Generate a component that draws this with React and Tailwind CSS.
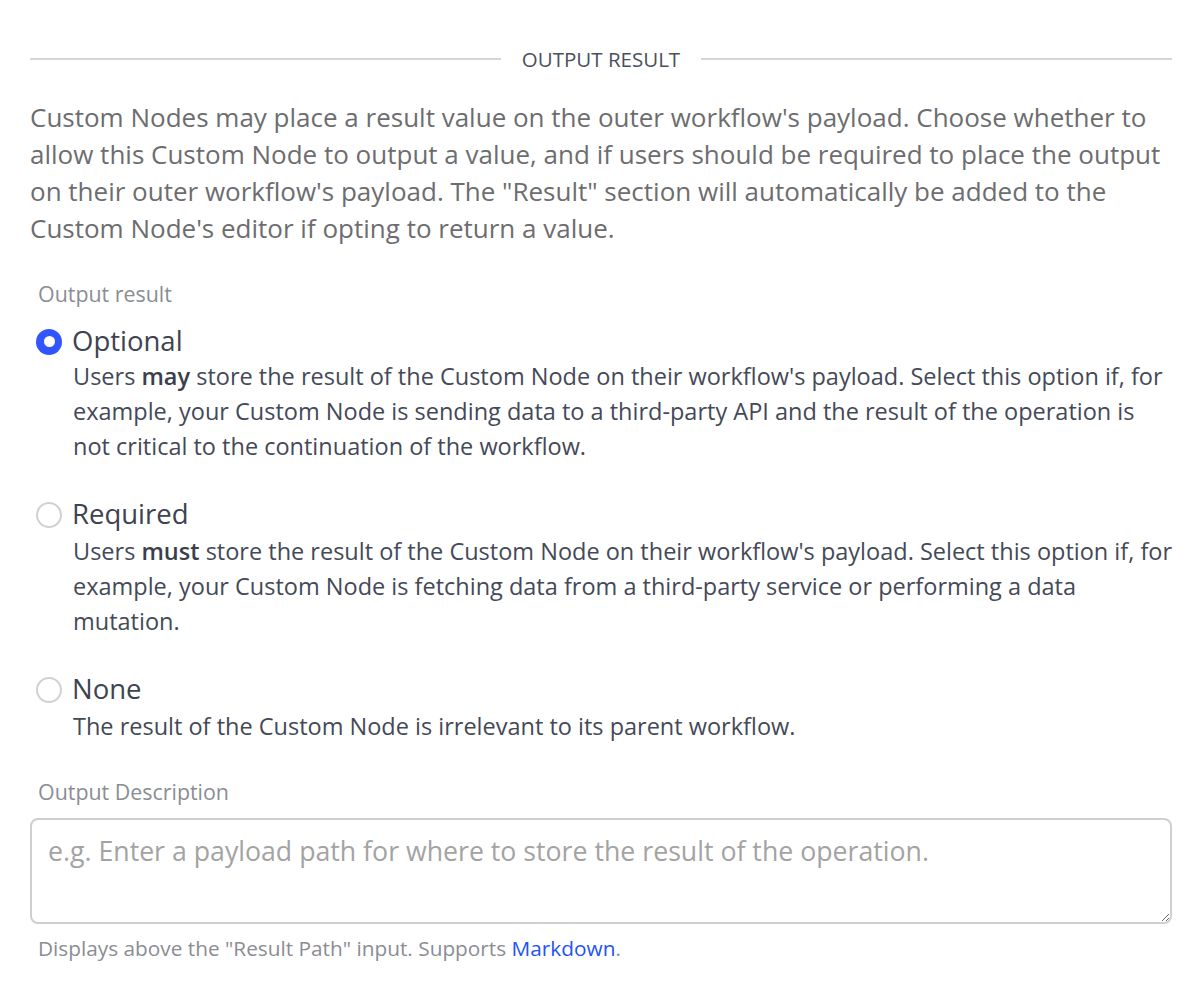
const font = { fontFamily: '"Open Sans", "Noto Sans", sans-serif' };

function Radio({ checked }) {
  if (checked) {
    return (
      <span className="mt-[1px] grid h-[26px] w-[26px] shrink-0 place-items-center rounded-full bg-[#3355ff]">
        <span className="h-[11px] w-[11px] rounded-full bg-white" />
      </span>
    );
  }
  return (
    <span className="mt-[1px] h-[26px] w-[26px] shrink-0 rounded-full border-2 border-[#d0d1d4] bg-white" />
  );
}

function Option({ checked, title, children, className, descClass }) {
  return (
    <label className={"flex flex-col " + (className || "")}>
      <div className="flex h-[36px] items-center gap-[10px] pl-[6px]">
        <Radio checked={checked} />
        <span className="text-[27.5px] text-[#3e4350]">{title}</span>
      </div>
      <p className={"-mr-[12px] pl-[43px] text-[23.5px] leading-[35px] text-[#444957] " + (descClass || "")}>
        {children}
      </p>
    </label>
  );
}

export default function App() {
  return (
    <div className="min-h-screen bg-white pl-[30px] pr-[28px] pt-[44px]" style={font}>
      <div className="flex items-center gap-[21px]">
        <div className="h-[2px] flex-1 bg-[#d6d6d6]" />
        <h3 className="text-[20.5px] uppercase leading-[30px] text-[#4b505c]">Output Result</h3>
        <div className="h-[2px] flex-1 bg-[#d6d6d6]" />
      </div>

      <p className="mt-[25px] text-[26px] leading-[37px] text-[#6d6d6f]">
        Custom Nodes may place a result value on the outer workflow's payload. Choose whether to
        allow this Custom Node to output a value, and if users should be required to place the output
        on their outer workflow's payload. The "Result" section will automatically be added to the
        Custom Node's editor if opting to return a value.
      </p>

      <div className="mt-[32px] pl-[8px] text-[21.4px] leading-[30px] text-[#8a8d93]">Output result</div>

      <div className="mt-[14px] flex flex-col">
        <Option checked title="Optional">
          Users <strong className="font-semibold text-[#3a3f4b]">may</strong> store the result of the Custom Node on their workflow's payload. Select this option if, for
          <br />
          example, your Custom Node is sending data to a third-party API and the result of the operation is
          <br />
          not critical to the continuation of the workflow.
        </Option>
        <Option title="Required" className="mt-[32px]" descClass="mt-[2px]">
          Users <strong className="font-semibold text-[#3a3f4b]">must</strong> store the result of the Custom Node on their workflow's payload. Select this option if, for
          <br />
          example, your Custom Node is fetching data from a third-party service or performing a data
          <br />
          mutation.
        </Option>
        <Option title="None" className="mt-[32px]" descClass="mt-[2px]">
          The result of the Custom Node is irrelevant to its parent workflow.
        </Option>
      </div>

      <div className="mt-[33px] pl-[8px] text-[21.4px] leading-[30px] text-[#8a8d93]">Output Description</div>

      <textarea
        className="mt-[11px] block h-[106px] w-full resize-y rounded-[8px] border-2 border-[#cfcfcf] px-[16px] py-[13px] text-[26.7px] leading-[36px] text-[#333] outline-none placeholder:text-[#a3a3a3]"
        style={font}
        placeholder="e.g. Enter a payload path for where to store the result of the operation."
      />

      <p className="mt-[10px] pl-[8px] text-[20.8px] leading-[28px] text-[#8a8d93]">
        Displays above the "Result Path" input. Supports{" "}
        <a href="#" className="text-[#2253f5]">Markdown</a>.
      </p>
    </div>
  );
}
